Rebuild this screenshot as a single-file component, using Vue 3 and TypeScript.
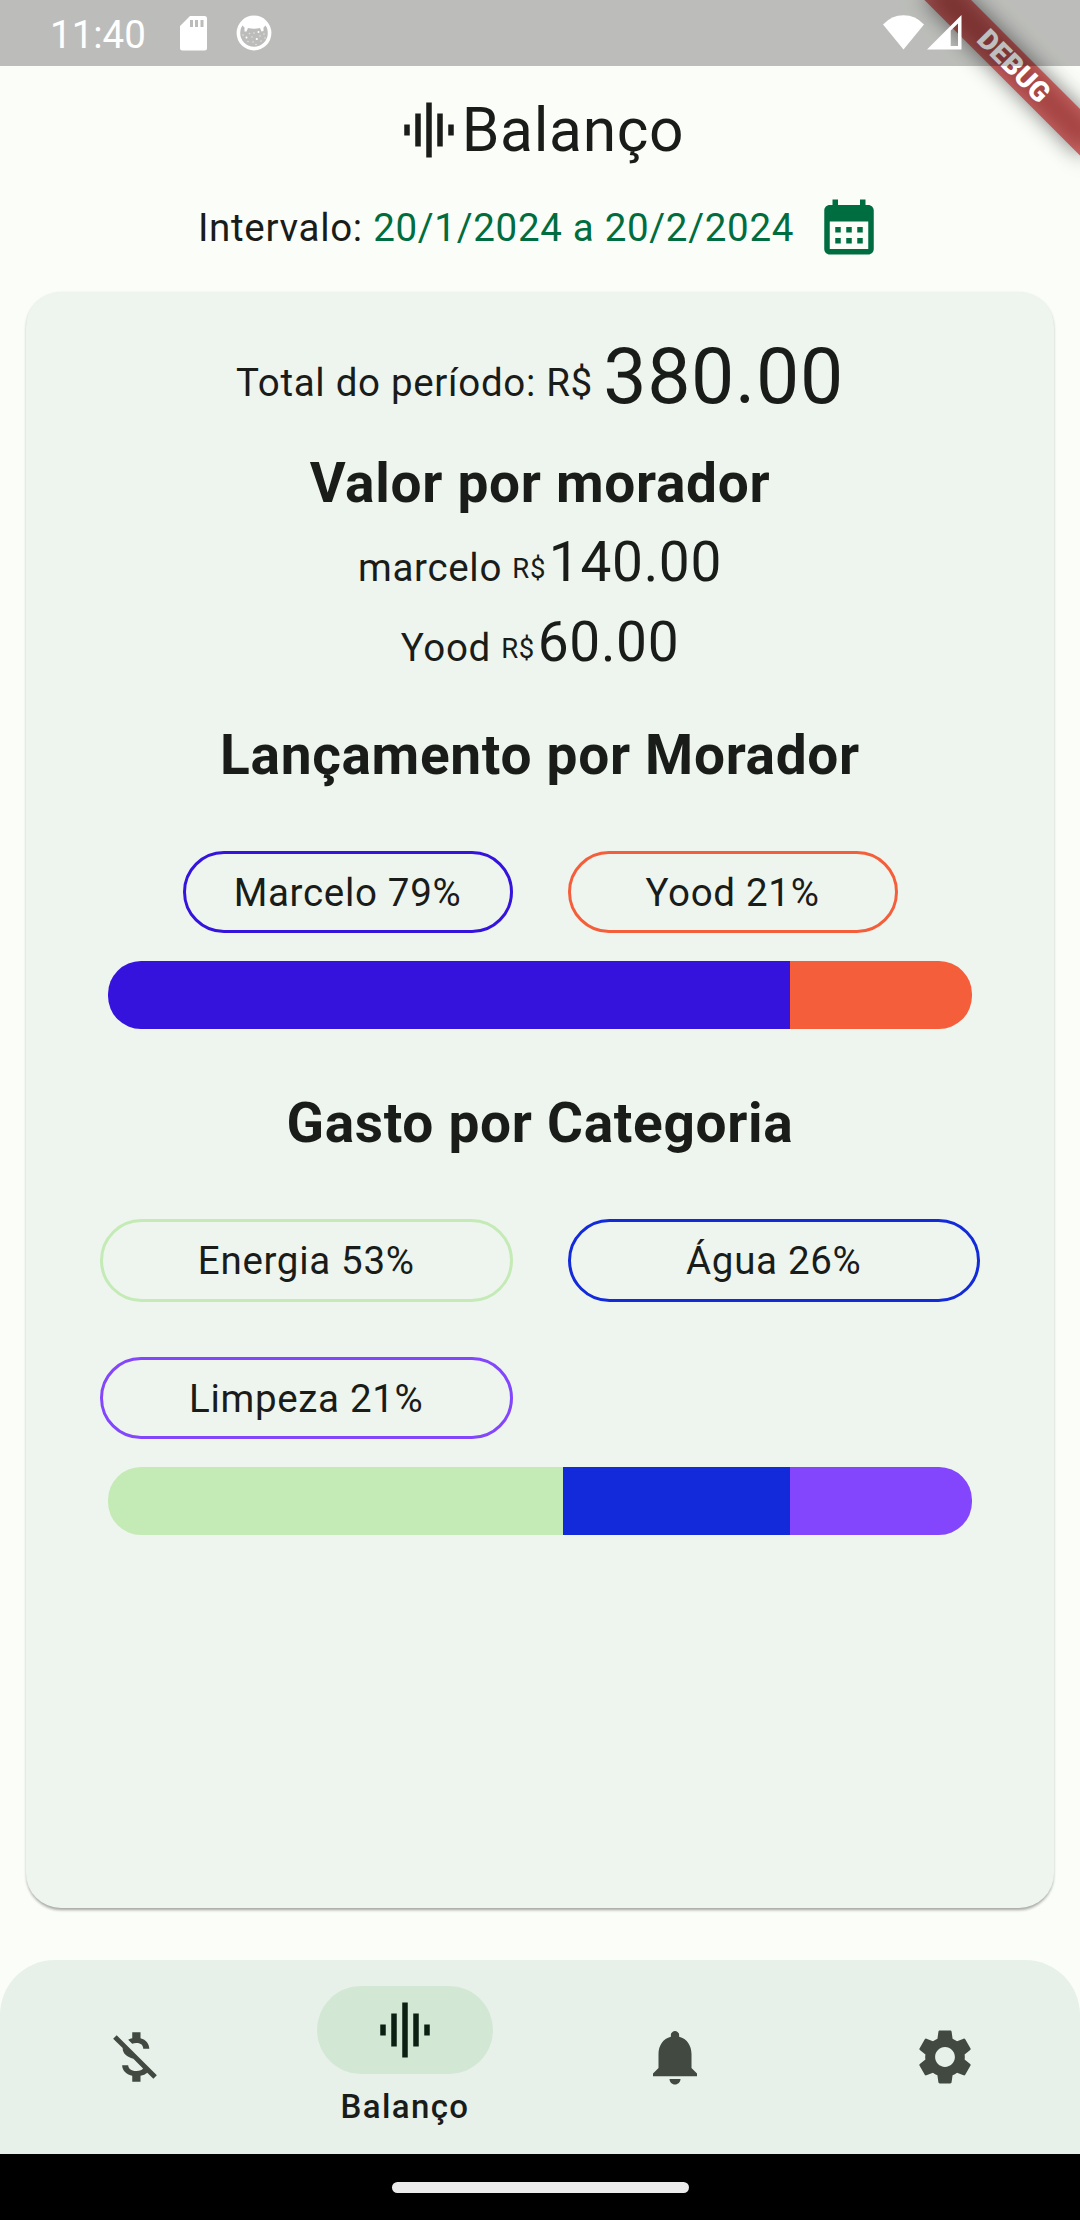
<script setup lang="ts">
interface Resident {
  name: string
  amount: string
}

interface Share {
  label: string
  parts: number
  color: string
}

const residents: Resident[] = [
  { name: 'marcelo', amount: '140.00' },
  { name: 'Yood', amount: '60.00' },
]

const byResident: Share[] = [
  { label: 'Marcelo', parts: 15, color: '#3513dd' },
  { label: 'Yood', parts: 4, color: '#f55e3a' },
]

const byCategory: Share[] = [
  { label: 'Energia', parts: 10, color: '#c4eab6' },
  { label: 'Água', parts: 5, color: '#122ad9' },
  { label: 'Limpeza', parts: 4, color: '#8346fd' },
]

const TOTAL_PARTS = 19
const percent = (s: Share): string => `${Math.round((s.parts / TOTAL_PARTS) * 100)}%`
const width = (s: Share): string => `${(s.parts / TOTAL_PARTS) * 100}%`

const EQ =
  'M7 18h2V6H7v12zm4 4h2V2h-2v20zm-8-8h2v-4H3v4zm12 4h2V6h-2v12zm4-8v4h2v-4h-2z'
const CALENDAR =
  'M19 4h-1V2h-2v2H8V2H6v2H5c-1.11 0-1.99.9-1.99 2L3 20c0 1.1.89 2 2 2h14c1.1 0 2-.9 2-2V6c0-1.1-.9-2-2-2zm0 16H5V10h14v10zM9 14H7v-2h2v2zm4 0h-2v-2h2v2zm4 0h-2v-2h2v2zm-8 4H7v-2h2v2zm4 0h-2v-2h2v2zm4 0h-2v-2h2v2z'

interface Tab {
  id: string
  icon: string
  label?: string
}

const tabs: Tab[] = [
  {
    id: 'expenses',
    icon: 'M12.5 6.9c1.78 0 2.44.85 2.5 2.1h2.21c-.07-1.72-1.12-3.3-3.21-3.81V3h-3v2.16c-.53.12-1.03.3-1.48.54l1.47 1.47c.41-.17.91-.27 1.51-.27zM5.33 4.06L4.06 5.33 7.5 8.77c0 2.08 1.56 3.21 3.91 3.91l3.51 3.51c-.34.48-1.05.91-2.42.91-2.06 0-2.87-.92-2.98-2.1h-2.2c.12 2.19 1.76 3.42 3.68 3.83V21h3v-2.15c.96-.18 1.82-.55 2.45-1.12l2.22 2.22 1.27-1.27L5.33 4.06z',
  },
  { id: 'balance', icon: EQ, label: 'Balanço' },
  {
    id: 'alerts',
    icon: 'M12 22c1.1 0 2-.9 2-2h-4c0 1.1.89 2 2 2zm6-6v-5c0-3.07-1.64-5.64-4.5-6.32V4c0-.83-.67-1.5-1.5-1.5s-1.5.67-1.5 1.5v.68C7.63 5.36 6 7.92 6 11v5l-2 2v1h16v-1l-2-2z',
  },
  {
    id: 'settings',
    icon: 'M19.14 12.94c.04-.3.06-.61.06-.94 0-.32-.02-.64-.07-.94l2.03-1.58c.18-.14.23-.41.12-.61l-1.92-3.32c-.12-.22-.37-.29-.59-.22l-2.39.96c-.5-.38-1.03-.7-1.62-.94l-.36-2.54c-.04-.24-.24-.41-.48-.41h-3.84c-.24 0-.43.17-.47.41l-.36 2.54c-.59.24-1.13.57-1.62.94l-2.39-.96c-.22-.08-.47 0-.59.22L2.74 8.87c-.12.21-.08.47.12.61l2.03 1.58c-.05.3-.09.63-.09.94s.02.64.07.94l-2.03 1.58c-.18.14-.23.41-.12.61l1.92 3.32c.12.22.37.29.59.22l2.39-.96c.5.38 1.03.7 1.62.94l.36 2.54c.05.24.24.41.48.41h3.84c.24 0 .44-.17.47-.41l.36-2.54c.59-.24 1.13-.56 1.62-.94l2.39.96c.22.08.47 0 .59-.22l1.92-3.32c.12-.22.07-.47-.12-.61l-2.01-1.58zM12 15.6c-1.98 0-3.6-1.62-3.6-3.6s1.62-3.6 3.6-3.6 3.6 1.62 3.6 3.6-1.62 3.6-3.6 3.6z',
  },
]
</script>

<template>
  <div class="screen">
    <div class="banner-clip">
      <div class="banner">
        <div class="banner-shadow"></div>
        <div class="banner-strip">DEBUG</div>
      </div>
    </div>

    <div class="status">
      <span class="clock">11:40</span>
      <svg class="sd" viewBox="0 0 27 35">
        <path
          fill="#fff"
          fill-rule="evenodd"
          d="M10 0H24.500Q27 0 27 2.500V32Q27 34.500 24.500 34.500H2.500Q0 34.500 0 32V10ZM10 4V11H13V4ZM15 4V11H18V4ZM20.500 4V11H23.500V4Z"
        />
      </svg>
      <svg class="face" viewBox="0 0 36 36">
        <circle cx="18" cy="18" r="15.600" fill="none" stroke="#fff" stroke-width="3.600" />
        <path
          fill="#fff"
          d="M5 9Q10 2 18 2T31 9L27.500 12.500L27.500 16L25.500 16.500L24 13Q18 14.500 12 13L10.500 16.500L8.500 16.500L8.500 12.500Z"
        />
        <g fill="#fff">
          <circle cx="22.500" cy="17" r="1" />
          <circle cx="10.500" cy="22.500" r="1" />
          <circle cx="20.800" cy="24" r="1.100" />
        </g>
        <g fill="#fff" opacity=".55">
          <circle cx="13.500" cy="18.500" r=".8" />
          <circle cx="18" cy="18" r=".8" />
          <circle cx="7" cy="20" r=".8" />
          <circle cx="28" cy="19" r=".8" />
          <circle cx="16" cy="22" r=".8" />
          <circle cx="24" cy="21" r=".8" />
          <circle cx="29" cy="23" r=".8" />
          <circle cx="12" cy="26.500" r=".8" />
          <circle cx="17" cy="27" r=".8" />
          <circle cx="25" cy="26" r=".8" />
          <circle cx="20" cy="29.500" r=".8" />
        </g>
      </svg>
      <span class="grow"></span>
      <svg class="wifi" viewBox="0 0 41 35">
        <path fill="#fff" d="M20.500 34.500L0 9.500Q8.500 0.300 20.500 0.300T41 9.500Z" />
      </svg>
      <svg class="signal" viewBox="0 0 35 35">
        <path
          fill="#fff"
          fill-rule="evenodd"
          d="M0 34.500L34.500 0V34.500ZM23.700 15.500V31H31V8.500Z"
        />
      </svg>
    </div>

    <header class="title">
      <svg class="icon" viewBox="0 0 24 24"><path :d="EQ" /></svg>
      <span class="title-text">Balanço</span>
    </header>

    <div class="interval">
      <span class="interval-text">Intervalo: <span class="dates">20/1/2024 a 20/2/2024</span></span>
      <svg class="icon green" viewBox="0 0 24 24"><path :d="CALENDAR" /></svg>
    </div>

    <main class="card">
      <div class="total">
        <span class="total-label">Total do período: R$&nbsp;</span>
        <span class="total-value">380.00</span>
      </div>

      <h2>Valor por morador</h2>
      <div v-for="r in residents" :key="r.name" class="resident">
        {{ r.name }} <span class="currency">R$</span><span class="amount">{{ r.amount }}</span>
      </div>

      <h2 class="by-resident">Lançamento por Morador</h2>
      <div class="chips narrow">
        <div v-for="s in byResident" :key="s.label" class="chip" :style="{ borderColor: s.color }">
          {{ s.label }} {{ percent(s) }}
        </div>
      </div>
      <div class="bar">
        <div
          v-for="s in byResident"
          :key="s.label"
          :style="{ width: width(s), background: s.color }"
        ></div>
      </div>

      <h2 class="by-category">Gasto por Categoria</h2>
      <div class="chips">
        <div v-for="s in byCategory" :key="s.label" class="chip" :style="{ borderColor: s.color }">
          {{ s.label }} {{ percent(s) }}
        </div>
      </div>
      <div class="bar">
        <div
          v-for="s in byCategory"
          :key="s.label"
          :style="{ width: width(s), background: s.color }"
        ></div>
      </div>
    </main>

    <nav class="tabs">
      <div v-for="t in tabs" :key="t.id" class="tab" :class="{ active: t.label }">
        <div class="pill">
          <svg class="icon" viewBox="0 0 24 24"><path :d="t.icon" /></svg>
        </div>
        <span v-if="t.label" class="tab-label">{{ t.label }}</span>
      </div>
    </nav>

    <div class="gesture"><div class="handle"></div></div>
  </div>
</template>

<style>
body {
  margin: 0;
}
</style>

<style scoped>
.screen {
  position: relative;
  display: flex;
  flex-direction: column;
  width: 1080px;
  height: 2220px;
  overflow: hidden;
  background: #fbfdf8;
  color: #191c19;
  font-family: Roboto, 'Liberation Sans', sans-serif;
  font-size: 38.5px;
  letter-spacing: 0.6875px;
}

.icon {
  display: block;
  flex: none;
  width: 66px;
  height: 66px;
  fill: currentColor;
}

/* Corner ribbon, rotated around the top right corner */
.banner-clip {
  position: absolute;
  inset: 0;
  overflow: hidden;
  pointer-events: none;
}

.banner {
  position: absolute;
  left: 970px;
  top: 77px;
  width: 220px;
  height: 33px;
  transform: rotate(45deg);
  transform-origin: 110px -77px;
}

.banner-shadow {
  position: absolute;
  inset: 0;
  background: rgba(0, 0, 0, 0.5);
  filter: blur(10.9px);
}

.banner-strip {
  position: absolute;
  inset: 0;
  background: rgba(183, 28, 28, 0.627);
  color: #fff;
  font-size: 28.05px;
  font-weight: 900;
  line-height: 33px;
  letter-spacing: 0;
  text-align: center;
}

.status {
  position: relative;
  display: flex;
  flex: none;
  box-sizing: border-box;
  height: 66px;
  padding: 0 118px 0 50px;
  background: rgba(0, 0, 0, 0.25);
}

.clock {
  width: 130px;
  color: #fff;
  line-height: 69px;
  letter-spacing: 0;
}

.sd {
  width: 27px;
  height: 35px;
  margin-top: 16px;
}

.face {
  width: 36px;
  height: 36px;
  margin: 15.3px 0 0 29.3px;
}

.grow {
  flex: 1;
}

.wifi {
  width: 41px;
  height: 35px;
  margin-top: 15px;
}

.signal {
  width: 35px;
  height: 35px;
  margin: 15.3px 0 0 3.5px;
}

.title {
  display: flex;
  flex: none;
  align-items: center;
  justify-content: center;
  height: 66px;
  margin-top: 31px;
  font-size: 60.5px;
  line-height: 66px;
}

.title-text,
.interval-text {
  padding-top: 2px;
}

.interval {
  display: flex;
  flex: none;
  align-items: center;
  justify-content: center;
  gap: 22px;
  height: 66px;
  margin-top: 31px;
  line-height: 66px;
}

.dates,
.green {
  color: #006d40;
}

.card {
  box-sizing: border-box;
  width: 1028px;
  height: 1616.5px;
  margin: 31.5px auto 0;
  padding: 40px 47px 0;
  flex: none;
  border-radius: 35px;
  background: #eef5ee;
  box-shadow:
    0 2.75px 3px -1px rgba(0, 0, 0, 0.24),
    0 1.5px 3px rgba(0, 0, 0, 0.14);
}

.total {
  display: flex;
  align-items: center;
  justify-content: center;
  height: 90px;
}

.total-label {
  padding-top: 11px;
  line-height: 45px;
}

.total-value {
  font-size: 77px;
  line-height: 90px;
}

h2 {
  height: 64px;
  margin: 29px 0 7.5px;
  font-size: 55px;
  font-weight: 700;
  line-height: 64px;
  text-align: center;
}

.resident {
  height: 80px;
  line-height: 80px;
  text-align: center;
  white-space: nowrap;
}

.currency {
  margin-right: 2.75px;
  font-size: 27.5px;
  line-height: 1;
  vertical-align: 3px;
}

.amount {
  font-size: 55px;
}

h2.by-resident {
  margin: 41px 0 63.5px;
}

h2.by-category {
  margin: 62px 0 63.75px;
}

.chips {
  display: grid;
  grid-template-columns: 1fr 1fr;
  gap: 55px;
  width: 880px;
  margin: 0 auto;
}

.chips.narrow {
  width: 715px;
}

.chip {
  box-sizing: border-box;
  height: 82.5px;
  border: 3px solid;
  border-radius: 42px;
  line-height: 78px;
  text-align: center;
}

.bar {
  display: flex;
  width: 863.5px;
  height: 68.75px;
  margin: 27.5px auto 0;
  overflow: hidden;
  border-radius: 33px;
}

.tabs {
  display: flex;
  flex: none;
  height: 194px;
  margin-top: 52px;
  border-radius: 55px 55px 0 0;
  background: #e7f1e9;
}

.tab {
  display: flex;
  flex: 1;
  flex-direction: column;
  align-items: center;
  color: #414941;
}

.pill {
  display: flex;
  align-items: center;
  justify-content: center;
  width: 176px;
  height: 88px;
  margin-top: 53px;
  border-radius: 44px;
}

.active .pill {
  margin-top: 26px;
  background: #d2e8d4;
  color: #0c1f13;
}

.tab-label {
  margin-top: 11px;
  color: #191c19;
  font-size: 33px;
  font-weight: 500;
  line-height: 44px;
  letter-spacing: 1.375px;
}

.gesture {
  display: flex;
  flex: none;
  align-items: center;
  justify-content: center;
  height: 66px;
  background: #000;
}

.handle {
  width: 297px;
  height: 11px;
  border-radius: 5.5px;
  background: #ebebeb;
}
</style>
